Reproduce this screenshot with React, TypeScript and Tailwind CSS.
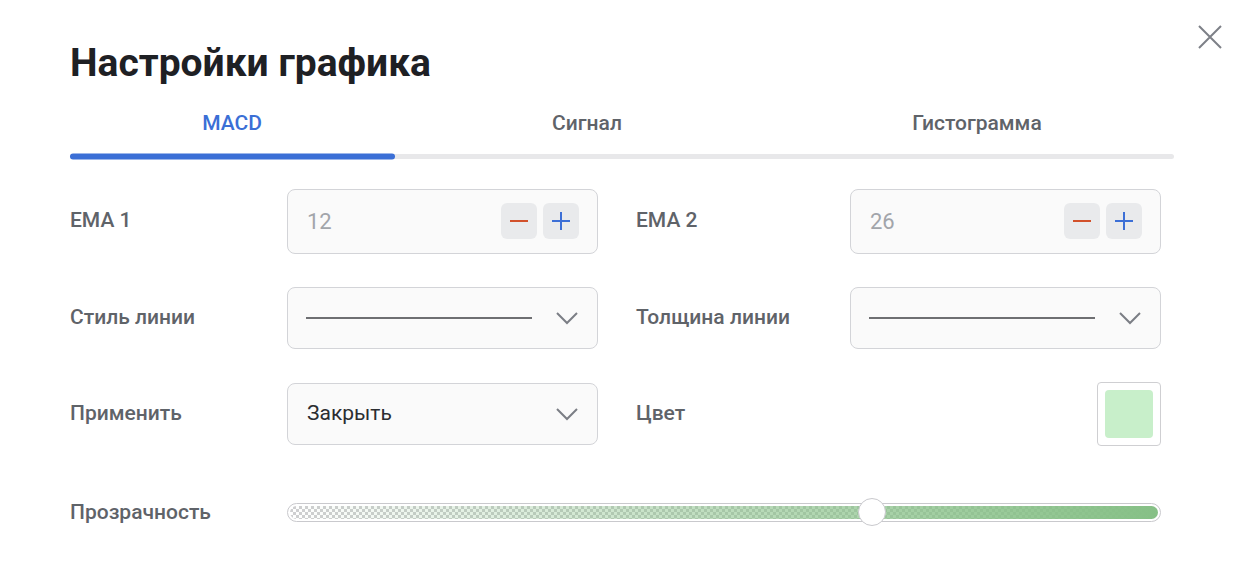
import React from "react";

const tabs = [
    { label: "MACD", width: "w-[324px]", active: true },
    { label: "Сигнал", width: "w-[386px]", active: false },
    { label: "Гистограмма", width: "flex-1", active: false },
];

const Chevron = () => (
    <svg width="24" height="14" viewBox="0 0 24 14" fill="none">
        <path d="M2 2l10 10L22 2" stroke="#7b7e85" strokeWidth="2" />
    </svg>
);

const Stepper = ({ value }: { value: string }) => (
    <div className="flex h-[65px] w-[311px] items-center justify-between rounded-lg border border-[#d3d4d8] bg-[#fafafa] pl-[19px] pr-[18px]">
        <span className="text-[22px] text-[#a2a5aa]">{value}</span>
        <div className="flex gap-[6px]">
            <button className="flex h-[36px] w-[36px] items-center justify-center rounded-md bg-[#e9eaec]">
                <svg width="20" height="20" viewBox="0 0 20 20">
                    <path d="M1 10h18" stroke="#d2512b" strokeWidth="2" />
                </svg>
            </button>
            <button className="flex h-[36px] w-[36px] items-center justify-center rounded-md bg-[#e9eaec]">
                <svg width="20" height="20" viewBox="0 0 20 20">
                    <path d="M1 10h18M10 1v18" stroke="#3c6fd6" strokeWidth="2" />
                </svg>
            </button>
        </div>
    </div>
);

const LineSelect = () => (
    <div className="flex h-[62px] w-[311px] items-center justify-between rounded-lg border border-[#d3d4d8] bg-[#fafafa] pl-[18px] pr-[18px]">
        <div className="h-[2px] w-[226px] bg-[#6e6f72]" />
        <Chevron />
    </div>
);

const Label = ({ children, width }: { children: React.ReactNode; width: string }) => (
    <div className={`${width} text-[21px] font-medium text-[#5f6369]`}>{children}</div>
);

export default function App() {
    return (
        <div className="relative h-[588px] w-[1246px] bg-white pl-[70px] font-['Roboto',sans-serif]">
            <button className="absolute right-[24px] top-[25px]">
                <svg width="24" height="24" viewBox="0 0 24 24">
                    <path d="M1 1l22 22M23 1L1 23" stroke="#7d8087" strokeWidth="2" />
                </svg>
            </button>
            <h1 className="pt-[37px] text-[39px] font-bold leading-[52px] text-[#1e2024]">
                Настройки графика
            </h1>
            <div className="mt-[19px] w-[1104px]">
                <div className="flex">
                    {tabs.map((tab) => (
                        <div
                            key={tab.label}
                            className={`${tab.width} text-center text-[21px] font-medium ${
                                tab.active ? "text-[#3b6fd6]" : "text-[#5f6369]"
                            }`}
                        >
                            {tab.label}
                        </div>
                    ))}
                </div>
                <div className="mt-[14px] h-[5px] rounded-full bg-[#e8e8ea]">
                    <div className="h-[6px] w-[325px] -translate-y-[0.5px] rounded-full bg-[#3b6fd6]" />
                </div>
            </div>

            <div className="mt-[30px] flex items-center">
                <Label width="w-[217px]">EMA 1</Label>
                <Stepper value="12" />
                <div className="w-[38px]" />
                <Label width="w-[214px]">EMA 2</Label>
                <Stepper value="26" />
            </div>

            <div className="mt-[33px] flex items-center">
                <Label width="w-[217px]">Стиль линии</Label>
                <LineSelect />
                <div className="w-[38px]" />
                <Label width="w-[214px]">Толщина линии</Label>
                <LineSelect />
            </div>

            <div className="mt-[33px] flex items-center">
                <Label width="w-[217px]">Применить</Label>
                <div className="flex h-[62px] w-[311px] items-center justify-between rounded-lg border border-[#d3d4d8] bg-[#fafafa] pl-[19px] pr-[18px]">
                    <span className="text-[21px] text-[#2b2d31]">Закрыть</span>
                    <Chevron />
                </div>
                <div className="w-[38px]" />
                <Label width="w-[214px]">Цвет</Label>
                <div className="ml-[247px] flex h-[64px] w-[64px] items-center justify-center rounded border border-[#cfcfd2] bg-white">
                    <div className="h-[48px] w-[48px] rounded bg-[#c8efca]" />
                </div>
            </div>

            <div className="mt-[51px] flex items-center">
                <Label width="w-[217px]">Прозрачность</Label>
                <div className="relative h-[19px] w-[874px] rounded-full border border-[#c9c9cd] bg-white p-[2px]">
                    <div className="h-full w-full rounded-full bg-[linear-gradient(to_right,rgba(134,192,134,0)_0%,rgba(134,192,134,0.55)_50%,#86c086_100%),repeating-conic-gradient(#cfcfd1_0%_25%,#ffffff_0%_50%)] [background-size:100%_100%,6px_6px]" />
                    <div className="absolute left-[570px] top-1/2 h-[28px] w-[28px] -translate-y-1/2 rounded-full border border-[#c9c9cd] bg-white" />
                </div>
            </div>
        </div>
    );
}
